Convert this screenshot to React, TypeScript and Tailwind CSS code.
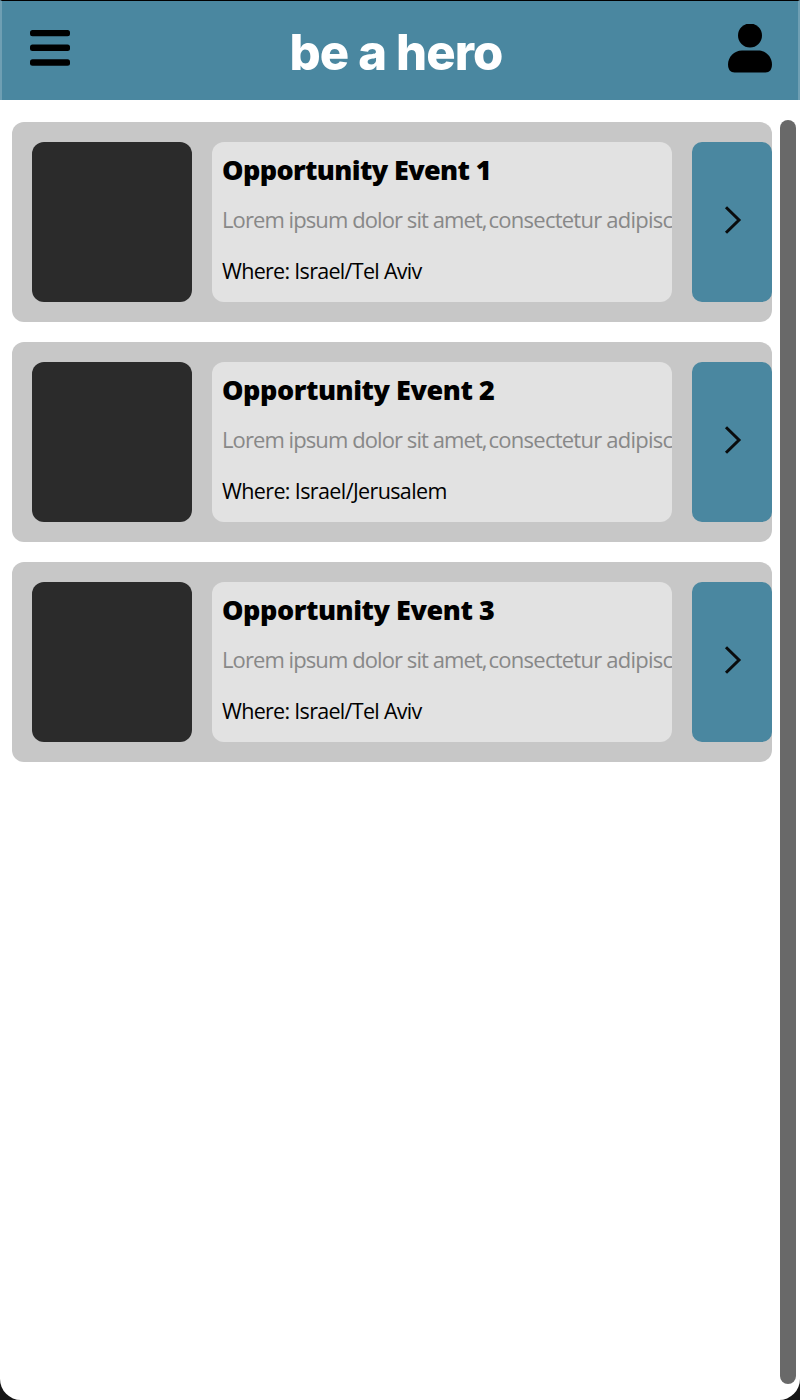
const events = [
  { title: 'Opportunity Event 1', where: 'Where: Israel/Tel Aviv', titleTrack: 'tracking-[-0.62px]', whereTrack: 'tracking-[-0.7px]' },
  { title: 'Opportunity Event 2', where: 'Where: Israel/Jerusalem', titleTrack: 'tracking-[-0.44px]', whereTrack: 'tracking-[-0.62px]' },
  { title: 'Opportunity Event 3', where: 'Where: Israel/Tel Aviv', titleTrack: 'tracking-[-0.44px]', whereTrack: 'tracking-[-0.7px]' },
];

function MenuIcon() {
  return (
    <svg className="block" width="40" height="38" viewBox="0 0 40 38">
      <rect x="0" y="0.9" width="40" height="6.4" rx="2.5" />
      <rect x="0" y="15.6" width="40" height="6.4" rx="2.5" />
      <rect x="0" y="30.3" width="40" height="6.4" rx="2.5" />
    </svg>
  );
}

function UserIcon() {
  return (
    <svg className="block" width="44" height="50" viewBox="0 0 44 50">
      <circle cx="22" cy="11.5" r="12" />
      <path d="M14 26.500h16c8 0 14 6.500 14 14 0 5-2.500 8-6.500 8h-31C2.500 48.500 0 45.500 0 40.500c0-7.500 6-14 14-14Z" />
    </svg>
  );
}

function Chevron() {
  return (
    <svg className="mb-1 ml-0.5 block" width="18" height="30" viewBox="0 0 18 30" fill="none" stroke="#0a0c0d" strokeWidth="3">
      <path d="M2 2.200 15 15 2 27.800" />
    </svg>
  );
}

export default function App() {
  return (
    <div className="h-[1400px] w-[800px] overflow-hidden bg-[#151515] font-['Open_Sans','Noto_Sans',sans-serif]">
      <div className="flex h-full flex-col overflow-hidden rounded-b-[21px] bg-white">
        <header className="grid h-[100px] shrink-0 grid-cols-[44px_1fr_44px] items-start border-x-2 border-t border-x-[#6f9fb3] border-t-black bg-[#4a87a0] pr-[26px] pl-7">
          <button className="mt-[28px]" aria-label="Menu"><MenuIcon /></button>
          <h1 className="mt-[22px] pr-[10px] text-center font-['Inter',sans-serif] text-[49px] leading-[60px] font-extrabold tracking-[-0.9px] whitespace-nowrap text-white">be a hero</h1>
          <button className="mt-[23px]" aria-label="Profile"><UserIcon /></button>
        </header>
        <div className="flex min-h-0 flex-1 justify-between pr-1 pl-3">
          <main className="flex w-[760px] flex-col gap-5 pt-[22px]">
            {events.map((e) => (
              <article key={e.title} className="flex h-[200px] gap-5 rounded-xl bg-[#c7c7c7] py-5 pl-5">
                <div className="w-40 shrink-0 rounded-xl bg-[#2b2b2b]" />
                <div className="flex w-[460px] shrink-0 flex-col overflow-hidden rounded-xl bg-[#e2e2e2] pt-[3px] pl-[10px] whitespace-nowrap">
                  <h2 className={`h-[50px] text-[27px] leading-[50px] font-extrabold text-black ${e.titleTrack}`}>{e.title}</h2>
                  <p className="h-[50px] text-[22px] leading-[49px] tracking-[-0.92px] text-[#888888]">Lorem ipsum dolor sit amet,<span className="-ml-[3px] tracking-[-0.76px]"> consectetur adipiscing elit</span></p>
                  <p className={`h-[50px] text-[21.5px] leading-[51px] text-black ${e.whereTrack}`}>{e.where}</p>
                </div>
                <button className="flex w-20 shrink-0 items-center justify-center rounded-[10px] bg-[#4a87a0]" aria-label="Open event"><Chevron /></button>
              </article>
            ))}
          </main>
          <div className="mt-5 mb-4 w-4 rounded-full bg-[#696969]" />
        </div>
      </div>
    </div>
  );
}
